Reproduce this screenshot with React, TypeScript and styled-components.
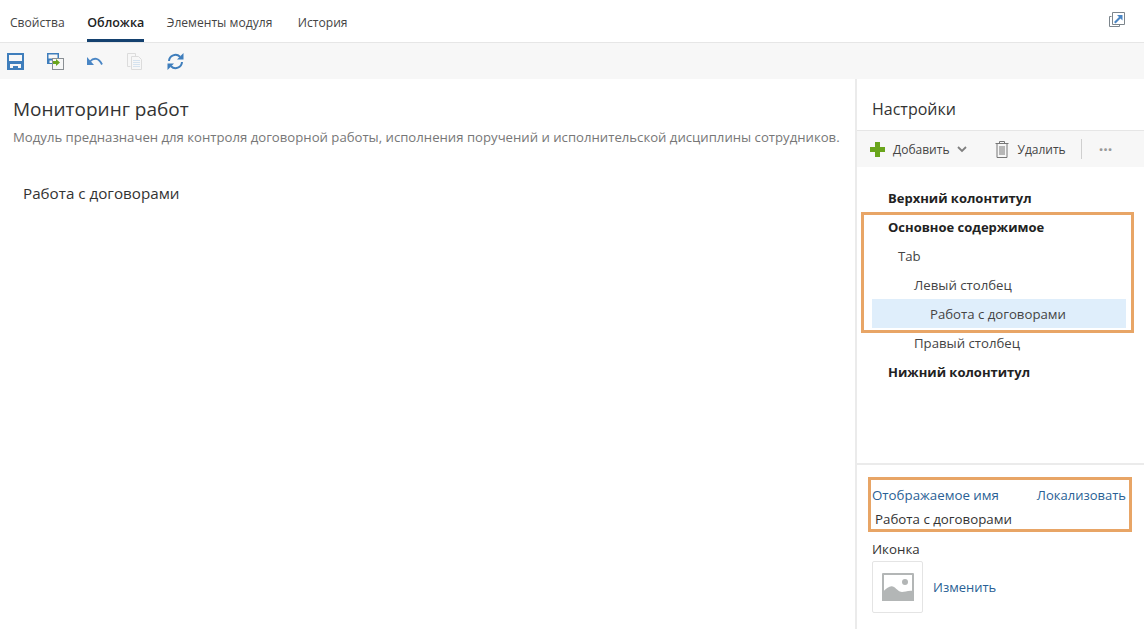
import React from "react";
import styled, { createGlobalStyle } from "styled-components";

const GlobalStyle = createGlobalStyle`
  html, body {
    margin: 0;
    padding: 0;
    background: #fff;
    font-family: "Open Sans", "Noto Sans", sans-serif;
    color: #333;
  }
  * {
    box-sizing: border-box;
  }
`;

const tabs = ["Свойства", "Обложка", "Элементы модуля", "История"];

const SaveIcon = () => (
  <svg width="17" height="17" viewBox="0 0 17 17">
    <path fillRule="evenodd" fill="#3f7ebc" d="M0 0h17v17H0zM2 2v6h13V2zM3 11v4h3v-2h5v2h3v-4z" />
    <rect x="8" y="14" width="2" height="1.5" fill="#3f7ebc" />
  </svg>
);

const SaveAsIcon = () => (
  <svg width="17" height="17" viewBox="0 0 17 17">
    <path fillRule="evenodd" fill="#3f7ebc" d="M0 0h12v11H0zM1.500 1.500v4h9v-4zM2.500 7.500v2.500h6v-2.500z" />
    <rect x="5.500" y="5.500" width="11" height="11" fill="#f7f7f7" stroke="#8a8f94" />
    <path fill="#6aa51c" d="M6 8h3V6l4 3.500-4 3.500v-2H6z" />
  </svg>
);

const UndoIcon = () => (
  <svg width="16" height="10" viewBox="0 0 16 10">
    <path fill="#4a86c5" d="M0 1v8h7z" />
    <path fill="none" stroke="#4a86c5" strokeWidth="1.800" d="M3 5.500c4-4.500 9-3.500 12 3" />
  </svg>
);

const CopyIcon = () => (
  <svg width="15" height="17" viewBox="0 0 15 17">
    <path fill="none" stroke="#dcdcdc" d="M.5.5h8v3M3.500 13.500h-3V.5M4.500 3.500h7l3 3v10h-10z" />
    <path stroke="#d6e3ef" d="M6 7.500h7M6 9.500h7M6 11.500h7M6 13.500h7" />
  </svg>
);

const RefreshIcon = () => (
  <svg width="17" height="17" viewBox="0 0 17 17">
    <path fill="none" stroke="#3f7ebc" strokeWidth="2" d="M2 8a6.500 6.500 0 0 1 11-4.300M15 9a6.500 6.500 0 0 1-11 4.300" />
    <path fill="#3f7ebc" d="M16.500 0v6.500h-6.500zM.5 17v-6.500h6.500z" />
  </svg>
);

const PopoutIcon = () => (
  <svg width="16" height="16" viewBox="0 0 16 16">
    <path fill="none" stroke="#7c858c" d="M2.500 4.500H.5v10h10v-2M3.500.5h12v12h-12z" />
    <path fill="#4a86c5" d="M8 3h5.500v5.500L11.500 6.500 6.500 11.500 5 10l5-5z" />
  </svg>
);

const PlusIcon = () => (
  <svg width="15" height="15" viewBox="0 0 15 15">
    <path fill="#6aa51c" d="M5 0h5v5h5v5h-5v5H5v-5H0V5h5z" />
  </svg>
);

const ChevronIcon = () => (
  <svg width="10" height="7" viewBox="0 0 10 7">
    <path fill="none" stroke="#7f7f7f" strokeWidth="1.800" d="M1 1l4 4 4-4" />
  </svg>
);

const TrashIcon = () => (
  <svg width="14" height="17" viewBox="0 0 14 17">
    <path fill="none" stroke="#777" d="M.5 2.500h13M4.500 2.500V.5h5v2M2 2.500v14h10v-14M5 5v9M7 5v9M9 5v9" />
  </svg>
);

const PictureIcon = () => (
  <svg width="32" height="28" viewBox="0 0 32 28">
    <rect width="32" height="28" rx="1" fill="#b3b6b6" />
    <rect x="2" y="2" width="28" height="18" fill="#fff" />
    <circle cx="23" cy="9" r="3" fill="#b3b6b6" />
    <path fill="#b3b6b6" d="M0 20c5-6 9-8 12-6s5 5 8 5 6-2 12-1v10H0z" />
  </svg>
);

const tree = [
  { label: "Верхний колонтитул", level: 0 },
  { label: "Основное содержимое", level: 0, group: true },
  { label: "Tab", level: 1, group: true },
  { label: "Левый столбец", level: 2, group: true },
  { label: "Работа с договорами", level: 3, group: true, selected: true },
  { label: "Правый столбец", level: 2 },
  { label: "Нижний колонтитул", level: 0 },
];

const indents = [16, 26, 42, 58];

const App: React.FC = () => {
  const renderRow = (row: (typeof tree)[number]) => (
    <TreeRow key={row.label} $indent={indents[row.level]} $bold={row.level === 0} $selected={row.selected}>
      {row.label}
    </TreeRow>
  );

  return (
    <Page>
      <GlobalStyle />
      <TabBar>
        {tabs.map((tab, i) => (
          <Tab key={tab} $active={i === 1}>
            {tab}
          </Tab>
        ))}
        <PopoutButton>
          <PopoutIcon />
        </PopoutButton>
      </TabBar>
      <Toolbar>
        <ToolButton><SaveIcon /></ToolButton>
        <ToolButton><SaveAsIcon /></ToolButton>
        <ToolButton><UndoIcon /></ToolButton>
        <ToolButton><CopyIcon /></ToolButton>
        <ToolButton><RefreshIcon /></ToolButton>
      </Toolbar>
      <Body>
        <Content>
          <Title>Мониторинг работ</Title>
          <Description>
            Модуль предназначен для контроля договорной работы, исполнения поручений и исполнительской дисциплины сотрудников.
          </Description>
          <Widget>Работа с договорами</Widget>
        </Content>
        <Sidebar>
          <SidebarTitle>Настройки</SidebarTitle>
          <SidebarToolbar>
            <SidebarAction>
              <PlusIcon />
              <span>Добавить</span>
              <ChevronIcon />
            </SidebarAction>
            <SidebarAction>
              <TrashIcon />
              <span>Удалить</span>
            </SidebarAction>
            <Separator />
            <Dots>···</Dots>
          </SidebarToolbar>
          <Tree>
            {renderRow(tree[0])}
            <TreeGroup>{tree.filter((row) => row.group).map(renderRow)}</TreeGroup>
            {renderRow(tree[5])}
            {renderRow(tree[6])}
          </Tree>
          <Properties>
            <NameField>
              <NameHeader>
                <FieldLabel>Отображаемое имя</FieldLabel>
                <LinkText>Локализовать</LinkText>
              </NameHeader>
              <NameValue>Работа с договорами</NameValue>
            </NameField>
            <IconLabel>Иконка</IconLabel>
            <IconRow>
              <IconBox>
                <PictureIcon />
              </IconBox>
              <LinkText>Изменить</LinkText>
            </IconRow>
          </Properties>
        </Sidebar>
      </Body>
    </Page>
  );
};

export default App;

const Page = styled.div`
  width: 1144px;
  height: 629px;
  display: flex;
  flex-direction: column;
  overflow: hidden;
`;

const TabBar = styled.div`
  height: 43px;
  display: flex;
  align-items: stretch;
  gap: 22.500px;
  padding: 0 0 0 10px;
  border-bottom: 1px solid #e6e6e6;
`;

const Tab = styled.div<{ $active?: boolean }>`
  font-size: ${(p) => (p.$active ? "12.500px" : "12.100px")};
  line-height: 45px;
  height: 42px;
  color: ${(p) => (p.$active ? "#222" : "#444")};
  font-weight: ${(p) => (p.$active ? 600 : 400)};
  border-bottom: ${(p) => (p.$active ? "3px solid #14416f" : "none")};
  &:nth-child(4) {
    margin-left: 3px;
  }
`;

const PopoutButton = styled.div`
  margin-left: auto;
  margin-right: 19px;
  padding-top: 11px;
`;

const Toolbar = styled.div`
  height: 36px;
  flex: none;
  display: flex;
  align-items: center;
  background: #f7f7f7;
  padding-left: 7px;
`;

const ToolButton = styled.div`
  width: 40px;
  display: flex;
  align-items: center;
`;

const Body = styled.div`
  flex: 1;
  display: flex;
  min-height: 0;
`;

const Content = styled.div`
  flex: 1;
  padding: 18px 13px 0;
`;

const Title = styled.div`
  font-size: 19px;
  line-height: 24px;
  color: #333;
`;

const Description = styled.div`
  margin-top: 7px;
  font-size: 13.160px;
  line-height: 18px;
  color: #777;
  white-space: nowrap;
`;

const Widget = styled.div`
  margin: 37px 0 0 10px;
  font-size: 15.200px;
  line-height: 20px;
  color: #333;
`;

const Sidebar = styled.div`
  width: 289px;
  flex: none;
  border-left: 2px solid #ebebeb;
  display: flex;
  flex-direction: column;
`;

const SidebarTitle = styled.div`
  height: 52px;
  padding: 18px 0 0 15px;
  font-size: 16px;
  line-height: 24px;
  color: #333;
  border-bottom: 1px solid #e6e6e6;
`;

const SidebarToolbar = styled.div`
  height: 36px;
  flex: none;
  display: flex;
  align-items: center;
  background: #f7f7f7;
  padding-left: 13px;
  font-size: 12px;
  color: #444;
`;

const SidebarAction = styled.div`
  display: flex;
  align-items: center;
  gap: 8px;
  margin-right: 28px;
  & + & {
    margin-right: 15px;
  }
`;

const Separator = styled.div`
  width: 1px;
  height: 20px;
  background: #cfcfcf;
`;

const Dots = styled.div`
  margin-left: 17px;
  font-size: 16px;
  font-weight: 700;
  color: #999;
`;

const Tree = styled.div`
  flex: 1;
  padding: 17px 18px 0 15px;
`;

const TreeGroup = styled.div`
  position: relative;
  &::after {
    content: "";
    position: absolute;
    inset: -1px -8px -5px -11px;
    border: 3px solid #e8a566;
    pointer-events: none;
  }
`;

const TreeRow = styled.div<{ $indent: number; $bold?: boolean; $selected?: boolean }>`
  height: 29px;
  line-height: ${(p) => (p.$selected ? "31px" : "29px")};
  margin: ${(p) => (p.$selected ? "-1px 0 1px" : "0")};
  padding-left: ${(p) => p.$indent}px;
  font-size: ${(p) => (p.$bold ? "13px" : "13.200px")};
  font-weight: ${(p) => (p.$bold ? 700 : 400)};
  color: ${(p) => (p.$bold ? "#222" : "#444")};
  background: ${(p) => (p.$selected ? "#dfeefb" : "transparent")};
`;

const Properties = styled.div`
  height: 166px;
  flex: none;
  border-top: 2px solid #ebebeb;
  padding: 18px 18px 0 15px;
  font-size: 13.300px;
`;

const NameField = styled.div`
  position: relative;
  height: 47px;
  border-bottom: 1px solid #e4e4e4;
  &::after {
    content: "";
    position: absolute;
    inset: -6px -6px -3px -4px;
    border: 3px solid #e8a566;
    pointer-events: none;
  }
`;

const NameHeader = styled.div`
  display: flex;
  justify-content: space-between;
  line-height: 24px;
`;

const LinkText = styled.span`
  font-size: 13px;
  color: #2a5f95;
`;

const FieldLabel = styled(LinkText)`
  font-size: 13.300px;
`;

const NameValue = styled.div`
  padding-left: 3px;
  line-height: 24px;
  color: #333;
`;

const IconLabel = styled.div`
  margin-top: 9px;
  line-height: 20px;
  color: #333;
`;

const IconRow = styled.div`
  display: flex;
  align-items: center;
  gap: 10px;
  margin-top: 2px;
`;

const IconBox = styled.div`
  width: 51px;
  height: 52px;
  border: 1px solid #e4e4e4;
  border-radius: 2px;
  display: flex;
  align-items: center;
  justify-content: center;
`;
